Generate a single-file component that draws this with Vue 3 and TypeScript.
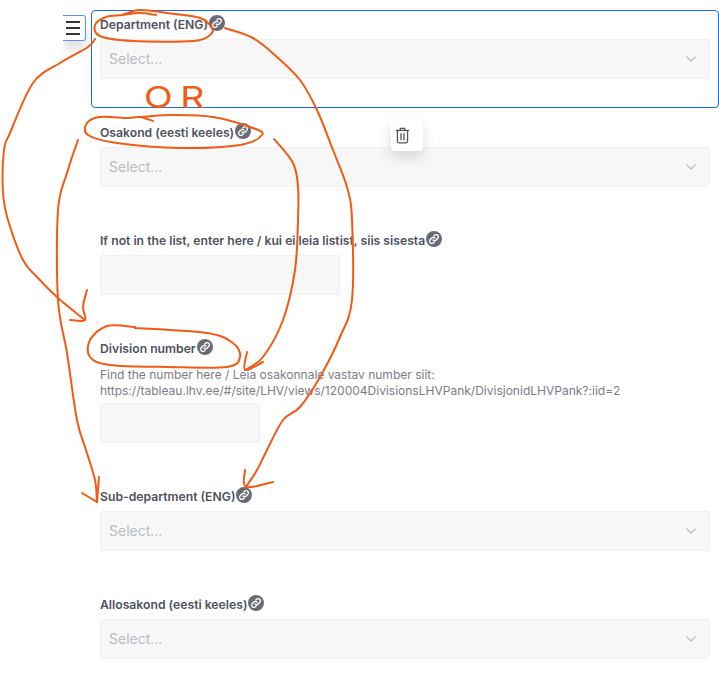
<script setup lang="ts">
type Pt = [number, number]

function smooth(pts: Pt[]): string {
  let d = `M${pts[0][0]} ${pts[0][1]}`
  for (let i = 0; i < pts.length - 1; i++) {
    const p0 = pts[i - 1] ?? pts[i]
    const p1 = pts[i]
    const p2 = pts[i + 1]
    const p3 = pts[i + 2] ?? p2
    const c1x = p1[0] + (p2[0] - p0[0]) / 6
    const c1y = p1[1] + (p2[1] - p0[1]) / 6
    const c2x = p2[0] - (p3[0] - p1[0]) / 6
    const c2y = p2[1] - (p3[1] - p1[1]) / 6
    d += ` C${c1x.toFixed(1)} ${c1y.toFixed(1)} ${c2x.toFixed(1)} ${c2y.toFixed(1)} ${p2[0]} ${p2[1]}`
  }
  return d
}

const strokes: Pt[][] = [
  // ellipse around Department
  [[156, 15], [140, 13], [122, 15], [106, 17], [95, 25], [100, 36], [133, 41], [193, 41], [210, 35], [212, 28], [200, 18], [167, 13], [140, 10], [122, 15]],
  // left long arrow to Division number
  [[95, 39], [88, 47], [60, 63], [33, 83], [10, 133], [4, 150], [3, 193], [8, 220], [23, 260], [37, 277], [58, 298], [85, 320]],
  [[70, 320], [85, 320], [83, 307], [87, 290]],
  // right long arrow to Sub-department icon
  [[225, 28], [253, 38], [277, 57], [300, 80], [317, 110], [333, 150], [347, 187], [352, 220], [352, 300], [340, 337], [320, 377], [300, 407], [283, 420], [267, 450], [257, 470], [246, 487]],
  [[245, 470], [246, 487], [273, 482]],
  // ellipse around Osakond
  [[153, 121], [140, 117], [128, 118], [100, 117], [87, 123], [88, 135], [117, 143], [180, 148], [240, 145], [262, 135], [253, 128], [213, 117], [173, 115], [140, 117]],
  // arrow from Osakond down to Sub-department
  [[78, 140], [67, 173], [58, 210], [58, 300], [67, 353], [77, 420], [86, 450], [95, 480], [97, 502]],
  [[82, 493], [97, 502]],
  [[99, 477], [97, 502]],
  // arrow from Osakond to Division number
  [[274, 139], [293, 163], [298, 187], [298, 220], [295, 270], [283, 320], [263, 357], [245, 370]],
  [[247, 352], [245, 370], [263, 362]],
  // ellipse around Division number
  [[135, 327], [107, 326], [90, 340], [90, 357], [110, 365], [167, 367], [227, 367], [240, 357], [233, 343], [207, 333], [135, 328]],
]

const paths = strokes.map(smooth)
</script>

<template>
  <div class="page">
    <section class="block selected">
      <div class="label"><span>Department (ENG)</span><svg class="link" viewBox="0 0 16 16"><circle cx="8" cy="8" r="8" fill="#6b6b76" /><g fill="none" stroke="#fff" stroke-width="1.3" stroke-linecap="round"><path d="M7 9a2.2 2.2 0 0 0 3.2 0l1.5-1.5a2.2 2.2 0 0 0-3.2-3.2l-.7.7" /><path d="M9 7a2.2 2.2 0 0 0-3.2 0L4.3 8.5a2.2 2.2 0 0 0 3.2 3.2l.7-.7" /></g></svg></div>
      <div class="select"><span>Select...</span><svg class="chev" viewBox="0 0 10 6"><path d="M.5.7 5 5l4.5-4.3" /></svg></div>
    </section>
    <section class="block">
      <div class="label"><span>Osakond (eesti keeles)</span><svg class="link" viewBox="0 0 16 16"><circle cx="8" cy="8" r="8" fill="#6b6b76" /><g fill="none" stroke="#fff" stroke-width="1.3" stroke-linecap="round"><path d="M7 9a2.2 2.2 0 0 0 3.2 0l1.5-1.5a2.2 2.2 0 0 0-3.2-3.2l-.7.7" /><path d="M9 7a2.2 2.2 0 0 0-3.2 0L4.3 8.5a2.2 2.2 0 0 0 3.2 3.2l.7-.7" /></g></svg></div>
      <div class="select"><span>Select...</span><svg class="chev" viewBox="0 0 10 6"><path d="M.5.7 5 5l4.5-4.3" /></svg></div>
    </section>
    <section class="block">
      <div class="label"><span>If not in the list, enter here / kui ei leia listist, siis sisesta</span><svg class="link" viewBox="0 0 16 16"><circle cx="8" cy="8" r="8" fill="#6b6b76" /><g fill="none" stroke="#fff" stroke-width="1.3" stroke-linecap="round"><path d="M7 9a2.2 2.2 0 0 0 3.2 0l1.5-1.5a2.2 2.2 0 0 0-3.2-3.2l-.7.7" /><path d="M9 7a2.2 2.2 0 0 0-3.2 0L4.3 8.5a2.2 2.2 0 0 0 3.2 3.2l.7-.7" /></g></svg></div>
      <div class="input wide"></div>
    </section>
    <section class="block tall">
      <div class="label"><span>Division number</span><svg class="link" viewBox="0 0 16 16"><circle cx="8" cy="8" r="8" fill="#6b6b76" /><g fill="none" stroke="#fff" stroke-width="1.3" stroke-linecap="round"><path d="M7 9a2.2 2.2 0 0 0 3.2 0l1.5-1.5a2.2 2.2 0 0 0-3.2-3.2l-.7.7" /><path d="M9 7a2.2 2.2 0 0 0-3.2 0L4.3 8.5a2.2 2.2 0 0 0 3.2 3.2l.7-.7" /></g></svg></div>
      <p class="help">Find the number here / Leia osakonnale vastav number siit:<br />https://tableau.lhv.ee/#/site/LHV/views/120004DivisionsLHVPank/DivisjonidLHVPank?:iid=2</p>
      <div class="input narrow"></div>
    </section>
    <section class="block">
      <div class="label"><span>Sub-department (ENG)</span><svg class="link" viewBox="0 0 16 16"><circle cx="8" cy="8" r="8" fill="#6b6b76" /><g fill="none" stroke="#fff" stroke-width="1.3" stroke-linecap="round"><path d="M7 9a2.2 2.2 0 0 0 3.2 0l1.5-1.5a2.2 2.2 0 0 0-3.2-3.2l-.7.7" /><path d="M9 7a2.2 2.2 0 0 0-3.2 0L4.3 8.5a2.2 2.2 0 0 0 3.2 3.2l.7-.7" /></g></svg></div>
      <div class="select"><span>Select...</span><svg class="chev" viewBox="0 0 10 6"><path d="M.5.7 5 5l4.5-4.3" /></svg></div>
    </section>
    <section class="block">
      <div class="label"><span>Allosakond (eesti keeles)</span><svg class="link" viewBox="0 0 16 16"><circle cx="8" cy="8" r="8" fill="#6b6b76" /><g fill="none" stroke="#fff" stroke-width="1.3" stroke-linecap="round"><path d="M7 9a2.2 2.2 0 0 0 3.2 0l1.5-1.5a2.2 2.2 0 0 0-3.2-3.2l-.7.7" /><path d="M9 7a2.2 2.2 0 0 0-3.2 0L4.3 8.5a2.2 2.2 0 0 0 3.2 3.2l.7-.7" /></g></svg></div>
      <div class="select"><span>Select...</span><svg class="chev" viewBox="0 0 10 6"><path d="M.5.7 5 5l4.5-4.3" /></svg></div>
    </section>

    <button class="drag" type="button" aria-label="Menu"><i></i><i></i><i></i></button>
    <button class="trash" type="button" aria-label="Delete">
      <svg viewBox="0 0 16 18" width="15" height="17" fill="none" stroke="#55565c" stroke-width="1.4">
        <path d="M1 3.6h14" />
        <path d="M5.6 3.4V1.4h4.8v2" />
        <path d="M2.6 3.6v11.6a1.6 1.6 0 0 0 1.6 1.6h7.6a1.6 1.6 0 0 0 1.6-1.6V3.6" />
        <path d="M6.4 6.6v7.4M9.6 6.6v7.4" />
      </svg>
    </button>

    <svg class="ink" viewBox="0 0 719 673" width="719" height="673" fill="none" stroke="#f35a14" stroke-width="2" stroke-linecap="round" stroke-linejoin="round">
      <path v-for="(d, i) in paths" :key="i" :d="d" />
    </svg>
    <span class="or">OR</span>
  </div>
</template>

<style>
html, body { margin: 0; background: #fff; }
</style>

<style scoped>
.page {
  position: relative;
  width: 719px;
  height: 673px;
  overflow: hidden;
  box-sizing: border-box;
  padding: 10px 0 0 91px;
  display: flex;
  flex-direction: column;
  gap: 10px;
  font-family: Inter, "Noto Sans", sans-serif;
}
.block {
  box-sizing: border-box;
  flex: none;
  width: 628px;
  height: 98px;
  padding: 3px 8px 0;
  border: 1px solid transparent;
  border-radius: 4px;
}
.block.selected { border-color: #1a6adf; }
.block.tall { height: 138px; }
.label {
  display: flex;
  align-items: center;
  gap: 1px;
  height: 20px;
  margin-bottom: 5px;
  font-size: 12.2px;
  font-weight: 600;
  color: #4f525d;
}
.link { width: 16px; height: 16px; margin-top: -3px; flex: none; }
.select, .input {
  box-sizing: border-box;
  height: 40px;
  background: #f7f7f7;
  border: 1px solid #f0f0f0;
  border-radius: 3px;
}
.select {
  display: flex;
  align-items: center;
  justify-content: space-between;
  padding: 0 13px 0 8px;
  font-size: 14px;
  color: #b9bcc4;
}
.select span { margin-top: -2px; }
.chev { width: 10px; height: 6px; fill: none; stroke: #b4b4b8; stroke-width: 1.1; }
.input.wide { width: 240px; }
.input.narrow { width: 160px; }
.help {
  margin: 9px 0 4px;
  font-size: 12.02px;
  line-height: 16px;
  color: #7a7d87;
  white-space: nowrap;
}
.drag {
  position: absolute;
  left: 63px;
  top: 15px;
  width: 23px;
  height: 26px;
  padding: 0 0 0 3px;
  display: flex;
  flex-direction: column;
  justify-content: center;
  gap: 4px;
  background: #fff;
  border: 1px solid #5b95e6;
  border-left: 0;
  border-radius: 0 3px 3px 0;
  box-shadow: 0 10px 14px -2px rgba(0, 0, 0, 0.16);
  clip-path: inset(0 -5px -30px 0);
}
.drag i { display: block; width: 14px; height: 2px; background: #33343a; }
.trash {
  position: absolute;
  left: 391px;
  top: 119px;
  width: 32px;
  height: 32px;
  padding: 0 0 0 4px;
  display: flex;
  align-items: center;
  background: #fff;
  border: 0;
  border-radius: 4px;
  box-shadow: 0 6px 14px rgba(0, 0, 0, 0.14);
}
.ink { position: absolute; left: 0; top: 0; pointer-events: none; }
.or {
  position: absolute;
  left: 144px;
  top: 81px;
  font-size: 30px;
  line-height: 32px;
  font-weight: 400;
  letter-spacing: 6px;
  color: #f35a14;
  transform: scaleX(1.25);
  transform-origin: left center;
  pointer-events: none;
}
</style>
